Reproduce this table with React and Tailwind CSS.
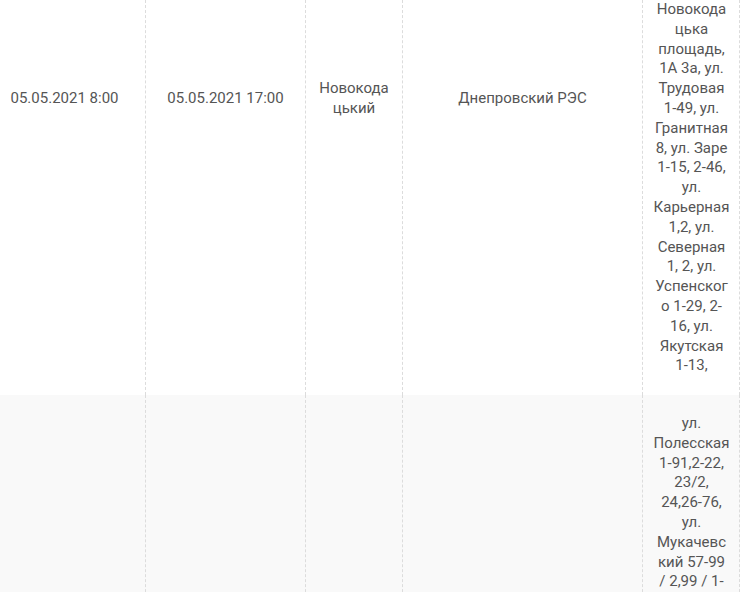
const cell = "border-l border-dashed border-[#dcdcdc] text-center";

const addr1 = [
  "Новокода",
  "цька",
  "площадь,",
  "1А 3а, ул.",
  "Трудовая",
  "1-49, ул.",
  "Гранитная",
  "8, ул. Заре",
  "1-15, 2-46,",
  "ул.",
  "Карьерная",
  "1,2, ул.",
  "Северная",
  "1, 2, ул.",
  "Успенског",
  "о 1-29, 2-",
  "16, ул.",
  "Якутская",
  "1-13,",
];

const addr2 = [
  "ул.",
  "Полесская",
  "1-91,2-22,",
  "23/2,",
  "24,26-76,",
  "ул.",
  "Мукачевс",
  "кий 57-99",
  "/ 2,99 / 1-",
  "3",
];

function Lines({ items }) {
  return items.map((t, i) => (
    <div key={i} className="whitespace-nowrap">
      {t}
    </div>
  ));
}

export default function App() {
  return (
    <div
      className="h-[592px] w-[740px] overflow-hidden bg-white text-[15px] leading-[19.8px] text-[#555]"
      style={{ fontFamily: "Roboto, 'Liberation Sans', sans-serif" }}
    >
      <div className="grid h-[395px] grid-cols-[145px_160px_97px_240px_98px] border-r border-dashed border-[#dcdcdc]">
        <div className="pr-[16px] pt-[89px] text-center">05.05.2021 8:00</div>
        <div className={`${cell} pt-[89px]`}>05.05.2021 17:00</div>
        <div className={`${cell} pt-[79px]`}>
          <Lines items={["Новокода", "цький"]} />
        </div>
        <div className={`${cell} pt-[89px]`}>Днепровский РЭС</div>
        <div className={cell}>
          <Lines items={addr1} />
        </div>
      </div>
      <div className="grid h-[197px] grid-cols-[145px_160px_97px_240px_98px] border-r border-dashed border-[#dcdcdc] bg-[#f9f9f9]">
        <div />
        <div className={cell} />
        <div className={cell} />
        <div className={cell} />
        <div className={`${cell} pt-[19px]`}>
          <Lines items={addr2} />
        </div>
      </div>
    </div>
  );
}
